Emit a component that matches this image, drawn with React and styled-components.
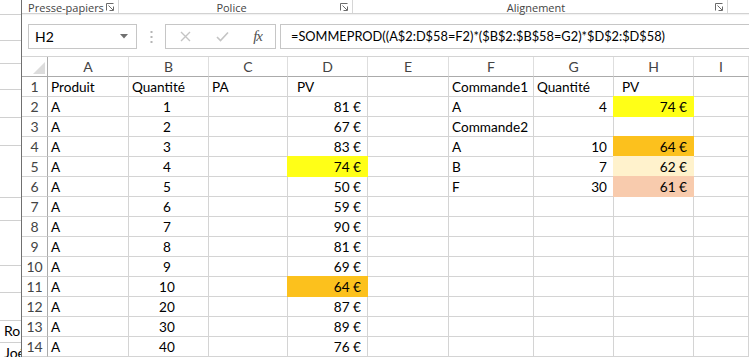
import React from "react";
import styled, { createGlobalStyle } from "styled-components";

const GlobalStyle = createGlobalStyle`
  html, body {
    margin: 0;
    padding: 0;
    background: #fff;
  }
  body {
    width: 749px;
    height: 357px;
    overflow: hidden;
    font-family: Lato, "Liberation Sans", sans-serif;
  }
`;

const YELLOW = "#ffff17";
const ORANGE = "#fcc11d";
const CREAM = "#fff2cc";
const PEACH = "#f8cbad";

const LETTERS = ["A", "B", "C", "D", "E", "F", "G", "H", "I"];

const sheetLeft = [
  ["A", "1", "81 €"],
  ["A", "2", "67 €"],
  ["A", "3", "83 €"],
  ["A", "4", "74 €", YELLOW],
  ["A", "5", "50 €"],
  ["A", "6", "59 €"],
  ["A", "7", "90 €"],
  ["A", "8", "81 €"],
  ["A", "9", "69 €"],
  ["A", "10", "64 €", ORANGE],
  ["A", "20", "87 €"],
  ["A", "30", "89 €"],
  ["A", "40", "76 €"],
];

const sheetRight = {
  2: [{ t: "A" }, { t: "4", align: "right" }, { t: "74 €", align: "right", fill: YELLOW }],
  3: [{ t: "Commande2" }, {}, {}],
  4: [{ t: "A" }, { t: "10", align: "right" }, { t: "64 €", align: "right", fill: ORANGE }],
  5: [{ t: "B" }, { t: "7", align: "right" }, { t: "62 €", align: "right", fill: CREAM }],
  6: [{ t: "F" }, { t: "30", align: "right" }, { t: "61 €", align: "right", fill: PEACH }],
};

function buildRows() {
  const rows = [
    [
      { t: "Produit" },
      { t: "Quantité" },
      { t: "PA" },
      { t: "PV", indent: 9 },
      {},
      { t: "Commande1" },
      { t: "Quantité" },
      { t: "PV", indent: 8 },
      {},
    ],
  ];
  sheetLeft.forEach(([a, b, d, fill], i) => {
    const n = i + 2;
    const right = sheetRight[n] || [{}, {}, {}];
    rows.push([
      { t: a },
      { t: b, align: "center" },
      {},
      { t: d, align: "right", fill },
      {},
      ...right,
      {},
    ]);
  });
  return rows;
}

const stripRows = [15, 26, 23, 26, 28, 28, 52, 23, 45, 27, 28, 22, 30];

function Launcher() {
  return (
    <svg width="8" height="8" viewBox="0 0 8 8" fill="none" stroke="#6a6a6a" strokeWidth="1">
      <path d="M0.5 7.5V0.5H7.5" />
      <path d="M2.5 2.5L7 7" />
      <path d="M7.5 3.5V7.5H3.5" />
    </svg>
  );
}

function Header() {
  return (
    <Ribbon>
      <RibbonGroup $width={97}>
        <GroupLabel>Presse-papiers</GroupLabel>
        <Launcher />
      </RibbonGroup>
      <RibbonGroup $width={234}>
        <GroupLabel>Police</GroupLabel>
        <Launcher />
      </RibbonGroup>
      <RibbonGroup $width={375}>
        <GroupLabel>Alignement</GroupLabel>
        <Launcher />
      </RibbonGroup>
    </Ribbon>
  );
}

function FormulaBar() {
  return (
    <FormulaRow>
      <NameBox>
        <span>H2</span>
        <svg width="8" height="5" viewBox="0 0 8 5">
          <path d="M0 0H8L4 4.5Z" fill="#707070" />
        </svg>
      </NameBox>
      <Grip>
        <svg width="3" height="12" viewBox="0 0 3 12" fill="#b5b5b5">
          <rect x="0.5" y="0" width="2" height="2" />
          <rect x="0.5" y="5" width="2" height="2" />
          <rect x="0.5" y="10" width="2" height="2" />
        </svg>
      </Grip>
      <FxBox>
        <svg width="11" height="11" viewBox="0 0 11 11" stroke="#c4c4c4" strokeWidth="1.4">
          <path d="M1 1L10 10M10 1L1 10" />
        </svg>
        <svg width="13" height="11" viewBox="0 0 13 11" fill="none" stroke="#c4c4c4" strokeWidth="1.6">
          <path d="M1 6L4.5 9.5L12 1.5" />
        </svg>
        <Fx>fx</Fx>
      </FxBox>
      <FormulaInput>=SOMMEPROD((A$2:D$58=F2)*($B$2:$B$58=G2)*$D$2:$D$58)</FormulaInput>
    </FormulaRow>
  );
}

function Sheet() {
  const rows = buildRows();
  return (
    <Grid>
      <Corner>
        <svg width="12" height="12" viewBox="0 0 12 12">
          <path d="M12 0V12H0Z" fill="#dcdcdc" />
        </svg>
      </Corner>
      {LETTERS.map((l) => (
        <ColHead key={l}>{l}</ColHead>
      ))}
      {rows.map((cells, r) => (
        <React.Fragment key={r}>
          <RowHead>{r + 1}</RowHead>
          {cells.map((c, i) => (
            <Cell key={i} $align={c.align} $fill={c.fill} $indent={c.indent}>
              {c.t}
            </Cell>
          ))}
        </React.Fragment>
      ))}
    </Grid>
  );
}

export default function App() {
  return (
    <>
      <GlobalStyle />
      <Screen>
        <BackStrip>
          {stripRows.map((h, i) => (
            <StripRow key={i} $h={h}>
              {i === 11 ? "Ro" : i === 12 ? "Joé" : ""}
            </StripRow>
          ))}
        </BackStrip>
        <Window>
          <Header />
          <FormulaBar />
          <Sheet />
        </Window>
      </Screen>
    </>
  );
}

const Screen = styled.div`
  display: flex;
  width: 749px;
  height: 357px;
  overflow: hidden;
`;

const BackStrip = styled.div`
  width: 21px;
  flex-shrink: 0;
  border-right: 1px solid #707070;
  overflow: hidden;
  display: flex;
  flex-direction: column;
`;

const StripRow = styled.div`
  box-sizing: border-box;
  height: ${(p) => p.$h}px;
  flex-shrink: 0;
  border-bottom: 1px solid #d0d0d0;
  padding: 1px 0 0 4px;
  font-size: 14px;
  line-height: 17px;
  color: #000;
  white-space: nowrap;
`;

const Window = styled.div`
  flex: 1;
  display: flex;
  flex-direction: column;
  min-width: 0;
`;

const Ribbon = styled.div`
  display: flex;
  height: 14px;
  border-bottom: 1px solid #d2d2d2;
  box-shadow: 0 1px 1px rgba(0, 0, 0, 0.05);
  background: #fff;
`;

const RibbonGroup = styled.div`
  box-sizing: border-box;
  width: ${(p) => p.$width}px;
  height: 13px;
  display: flex;
  align-items: flex-start;
  padding: 0 4px;
  border-right: 1px solid #d6d6d6;

  svg {
    margin-top: 3px;
    flex-shrink: 0;
  }
`;

const GroupLabel = styled.div`
  flex: 1;
  text-align: center;
  font-family: "Open Sans", "Noto Sans", sans-serif;
  font-size: 11px;
  line-height: 14px;
  margin-top: 1px;
  color: #444;
  white-space: nowrap;
`;

const FormulaRow = styled.div`
  display: flex;
  align-items: flex-start;
  height: 46px;
  box-sizing: border-box;
  padding: 10px 0 0 6px;
`;

const NameBox = styled.div`
  box-sizing: border-box;
  width: 109px;
  height: 25px;
  border: 1px solid #c6c6c6;
  display: flex;
  align-items: center;
  justify-content: space-between;
  padding: 0 8px 0 6px;
  font-size: 14px;
  color: #000;
`;

const Grip = styled.div`
  width: 28px;
  height: 25px;
  display: flex;
  align-items: center;
  justify-content: center;
`;

const FxBox = styled.div`
  box-sizing: border-box;
  width: 111px;
  height: 25px;
  border: 1px solid #c6c6c6;
  display: flex;
  align-items: center;
  justify-content: space-between;
  padding: 0 13px 0 14px;
`;

const Fx = styled.span`
  font-family: "Liberation Serif", serif;
  font-style: italic;
  font-size: 15px;
  color: #505050;
  letter-spacing: -1px;
`;

const FormulaInput = styled.div`
  box-sizing: border-box;
  flex: 1;
  margin-left: 4px;
  height: 25px;
  border: 1px solid #c6c6c6;
  border-right: none;
  padding-left: 10px;
  font-size: 12.8px;
  line-height: 23px;
  color: #000;
  white-space: nowrap;
  overflow: hidden;
`;

const Grid = styled.div`
  display: grid;
  grid-template-columns: 26px 81px 80px 79px 80px 81px 85px 80px 80px 1fr;
  grid-auto-rows: 20px;
  border-top: 1px solid #d4d4d4;
`;

const Corner = styled.div`
  box-sizing: border-box;
  border-right: 1px solid #ababab;
  border-bottom: 1px solid #ababab;
  display: flex;
  align-items: flex-end;
  justify-content: flex-end;
  padding: 0 2px 2px 0;
`;

const ColHead = styled.div`
  box-sizing: border-box;
  border-right: 1px solid #dedede;
  border-bottom: 1px solid #ababab;
  text-align: center;
  font-size: 14px;
  line-height: 19px;
  color: #444;
`;

const RowHead = styled.div`
  box-sizing: border-box;
  border-right: 1px solid #ababab;
  border-bottom: 1px solid #d4d4d4;
  text-align: center;
  font-size: 14px;
  padding-top: 1px;
  line-height: 18px;
  color: #444;
`;

const Cell = styled.div`
  box-sizing: border-box;
  border-right: 1px solid ${(p) => p.$fill || "#d4d4d4"};
  border-bottom: 1px solid ${(p) => p.$fill || "#d4d4d4"};
  background: ${(p) => p.$fill || "transparent"};
  margin: ${(p) => (p.$fill ? "-1px 0 0 -1px" : "0")};
  position: ${(p) => (p.$fill ? "relative" : "static")};
  text-align: ${(p) => p.$align || "left"};
  padding: ${(p) => (p.$fill ? "3px 6px 0 4px" : "2px 6px 0 3px")};
  padding-left: ${(p) => (p.$indent ? `${p.$indent}px` : undefined)};
  font-size: 13.6px;
  line-height: 17px;
  color: #000;
  white-space: nowrap;
  overflow: hidden;
`;
